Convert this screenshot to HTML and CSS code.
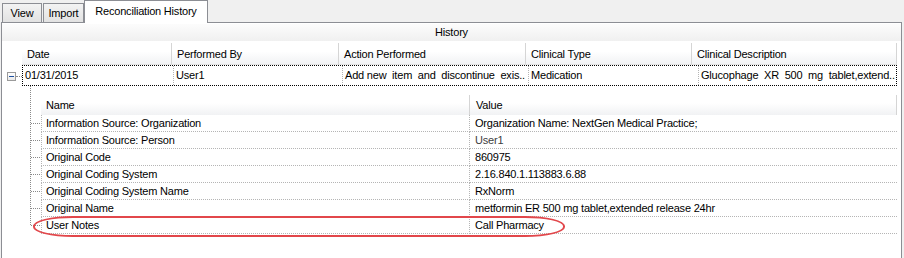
FILE: index.html
```html
<!DOCTYPE html>
<html lang="en">
<head>
<meta charset="UTF-8">
<title>Reconciliation History</title>
<link rel="stylesheet" href="styles.css">
</head>
<body>
<div class="tabs">
    <div class="tab t-view">View</div>
    <div class="tab t-import">Import</div>
    <div class="tab active">Reconciliation History</div>
</div>
<div class="panel">
    <div class="caption">History</div>
    <div class="grid">
        <div class="hrow">
            <div class="gutter"></div>
            <div class="hcell w-date">Date</div>
            <div class="hcell w-by">Performed By</div>
            <div class="hcell w-action">Action Performed</div>
            <div class="hcell w-type">Clinical Type</div>
            <div class="hcell w-desc">Clinical Description</div>
        </div>
        <div class="mrow">
            <div class="gutter"><span class="expander"></span><span class="link"></span></div>
            <div class="cells">
                <div class="cell d-date">01/31/2015</div>
                <div class="cell d-by">User1</div>
                <div class="cell d-action">Add new&nbsp; item&nbsp; and&nbsp; discontinue&nbsp; exis..</div>
                <div class="cell d-type">Medication</div>
                <div class="cell d-desc">Glucophage&nbsp; XR&nbsp; 500&nbsp; mg&nbsp; tablet,extend..</div>
            </div>
        </div>
        <div class="detail">
            <div class="drow head">
                <div class="tree"></div>
                <div class="dcell name">Name</div>
                <div class="dcell value">Value</div>
            </div>
            <div class="drow">
                <div class="tree"><span class="stub"></span></div>
                <div class="dcell name">Information Source: Organization</div>
                <div class="dcell value">Organization Name: NextGen Medical Practice;</div>
            </div>
            <div class="drow">
                <div class="tree"><span class="stub"></span></div>
                <div class="dcell name">Information Source: Person</div>
                <div class="dcell value muted">User1</div>
            </div>
            <div class="drow">
                <div class="tree"><span class="stub"></span></div>
                <div class="dcell name">Original Code</div>
                <div class="dcell value">860975</div>
            </div>
            <div class="drow">
                <div class="tree"><span class="stub"></span></div>
                <div class="dcell name">Original Coding System</div>
                <div class="dcell value">2.16.840.1.113883.6.88</div>
            </div>
            <div class="drow">
                <div class="tree"><span class="stub"></span></div>
                <div class="dcell name">Original Coding System Name</div>
                <div class="dcell value">RxNorm</div>
            </div>
            <div class="drow">
                <div class="tree"><span class="stub"></span></div>
                <div class="dcell name">Original Name</div>
                <div class="dcell value">metformin ER 500 mg tablet,extended release 24hr</div>
            </div>
            <div class="drow notes">
                <div class="tree"><span class="stub"></span></div>
                <div class="dcell name">User Notes</div>
                <div class="dcell value">Call Pharmacy</div>
                <div class="circle"></div>
            </div>
        </div>
    </div>
</div>
</body>
</html>
```

FILE: styles.css
```css
body {
    margin: 0;
    height: 258px;
    overflow: hidden;
    background-color: #f0f0f0;
    font-family: "Liberation Sans", Arial, sans-serif;
    font-size: 11px;
    letter-spacing: -0.2px;
    color: #000;
}
.tabs {
    display: flex;
    align-items: flex-end;
    gap: 1px;
    height: 22px;
    padding-left: 2px;
}
.tab {
    height: 19px;
    line-height: 19px;
    box-sizing: border-box;
    text-align: center;
    border: 1px solid #8c8e94;
    border-bottom: none;
    background: linear-gradient(#f3f3f3, #e2e2e2);
}
.t-view { width: 40px; }
.t-import { width: 41px; }
.tab.active {
    position: relative;
    z-index: 1;
    width: 124px;
    height: 23px;
    line-height: 20px;
    margin-bottom: -1px;
    margin-left: -1px;
    background: #fff;
}
.panel {
    height: 235px;
    margin: 0 2px 0 1px;
    border: 1px solid #8c8e94;
    border-bottom: none;
    background: #fff;
}
.caption {
    height: 17px;
    line-height: 17px;
    margin-top: 1px;
    text-align: center;
    background: linear-gradient(#fcfcfc, #f0f0f0);
}
.grid {
    margin-top: 2px;
}
.hrow, .mrow {
    display: flex;
}
.gutter {
    position: relative;
    width: 20px;
    flex-shrink: 0;
}
.hcell {
    height: 22px;
    line-height: 22px;
    padding-left: 5px;
    box-sizing: border-box;
    border-right: 1px solid #d5d5d5;
    border-bottom: 1px solid #e3e3e3;
    background: linear-gradient(#ffffff 40%, #f1f2f4);
    white-space: nowrap;
}
.w-date { width: 150px; }
.w-by { width: 167px; }
.w-action { width: 187px; }
.w-type { width: 166px; }
.w-desc { width: 205px; }

.cells {
    display: flex;
    width: 875px;
    height: 21px;
    box-sizing: border-box;
    border: 1px dotted #000;
}
.cell {
    line-height: 19px;
    padding-left: 2px;
    box-sizing: border-box;
    border-right: 1px dotted #b5b5b5;
    white-space: nowrap;
    overflow: hidden;
}
.d-date { width: 151px; }
.d-by { width: 169px; }
.d-action { width: 186px; }
.d-type { width: 170px; }
.d-desc { flex: 1; border-right: none; }

.expander {
    position: absolute;
    left: 5px;
    top: 7px;
    width: 7px;
    height: 7px;
    border: 1px solid #9a9a9a;
    background: linear-gradient(#fff, #e8e8e8);
}
.expander::after {
    content: "";
    position: absolute;
    left: 1px;
    top: 3px;
    width: 5px;
    height: 1px;
    background: #1c4fa0;
}
.link {
    position: absolute;
    left: 14px;
    top: 11px;
    width: 6px;
    border-top: 1px dotted #8a8a8a;
}

.detail {
    position: relative;
    padding-top: 9px;
}
.detail::before {
    content: "";
    position: absolute;
    left: 28px;
    top: 0;
    bottom: 9px;
    border-left: 1px dotted #8a8a8a;
}
.drow {
    position: relative;
    display: flex;
    height: 17px;
    margin-left: 20px;
}
.drow.head {
    height: 20px;
}
.tree {
    position: relative;
    width: 19px;
    flex-shrink: 0;
}
.stub {
    position: absolute;
    left: 9px;
    top: 8px;
    width: 9px;
    border-top: 1px dotted #8a8a8a;
}
.dcell {
    line-height: 16px;
    box-sizing: border-box;
    border-bottom: 1px dotted #b5b5b5;
    white-space: nowrap;
    overflow: hidden;
}
.dcell.name {
    width: 429px;
    padding-left: 4px;
    border-left: 1px dotted #b5b5b5;
    border-right: 1px dotted #b5b5b5;
}
.dcell.value {
    width: 427px;
    padding-left: 5px;
}
.head .dcell {
    line-height: 20px;
    border: none;
    border-right: 1px solid #d5d5d5;
    background: linear-gradient(#ffffff 40%, #f1f2f4);
}
.head .dcell.name {
    padding-left: 5px;
    border-left: none;
}
.head .dcell.value {
    padding-left: 6px;
}
.muted {
    color: #404040;
}
.circle {
    position: absolute;
    left: 11px;
    top: -1px;
    width: 532px;
    height: 21px;
    box-sizing: border-box;
    border: 2px solid #e2474b;
    border-radius: 40px / 10px;
}
```
